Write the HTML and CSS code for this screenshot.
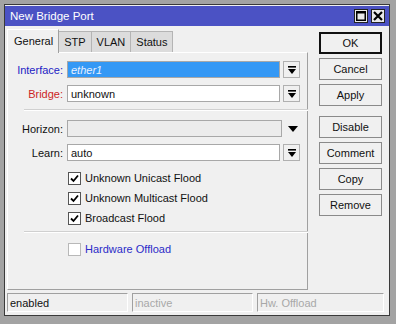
FILE: index.html
```html
<!DOCTYPE html>
<html lang="en">
<head>
  <meta charset="UTF-8">
  <title>New Bridge Port</title>
  <link rel="stylesheet" href="styles.css">
</head>
<body>

  <div class="window">
    <div class="titlebar">
      <span class="title">New Bridge Port</span>
      <div class="title-btns">
        <span class="tbtn">
          <svg width="10" height="10" viewBox="0 0 10 10"><rect x="0.75" y="0.75" width="8.5" height="8.5" fill="none" stroke="#000" stroke-width="1.5"/><rect x="0" y="0" width="10" height="2.5" fill="#000"/></svg>
        </span>
        <span class="tbtn">
          <svg width="10" height="10" viewBox="0 0 10 10"><path d="M1 1 L9 9 M9 1 L1 9" stroke="#000" stroke-width="2.2"/></svg>
        </span>
      </div>
    </div>

    <div class="main">
      <div class="left">
        <div class="tabs">
          <span class="tab active">General</span>
          <span class="tab">STP</span>
          <span class="tab">VLAN</span>
          <span class="tab">Status</span>
        </div>

        <div class="panel">
          <div class="row">
            <label class="lbl blue">Interface:</label>
            <div class="field selected">ether1</div>
            <span class="dd"><svg width="8" height="8" viewBox="0 0 8 8"><rect x="0" y="0" width="8" height="1.6" fill="#000"/><path d="M0 3 H8 L4 8 Z" fill="#000"/></svg></span>
          </div>
          <div class="row">
            <label class="lbl red">Bridge:</label>
            <div class="field">unknown</div>
            <span class="dd"><svg width="8" height="8" viewBox="0 0 8 8"><rect x="0" y="0" width="8" height="1.6" fill="#000"/><path d="M0 3 H8 L4 8 Z" fill="#000"/></svg></span>
          </div>

          <div class="sep"></div>

          <div class="row">
            <label class="lbl">Horizon:</label>
            <div class="field disabled wide"></div>
            <span class="arrow"><svg width="10" height="6" viewBox="0 0 10 6"><path d="M0 0 H10 L5 6 Z" fill="#000"/></svg></span>
          </div>
          <div class="row">
            <label class="lbl">Learn:</label>
            <div class="field">auto</div>
            <span class="dd"><svg width="8" height="8" viewBox="0 0 8 8"><rect x="0" y="0" width="8" height="1.6" fill="#000"/><path d="M0 3 H8 L4 8 Z" fill="#000"/></svg></span>
          </div>

          <div class="checks">
            <div class="check">
              <span class="box"><svg width="11" height="11" viewBox="0 0 11 11"><path d="M2 5.5 L4.5 8 L9 2.5" fill="none" stroke="#000" stroke-width="1.8"/></svg></span>
              Unknown Unicast Flood
            </div>
            <div class="check">
              <span class="box"><svg width="11" height="11" viewBox="0 0 11 11"><path d="M2 5.5 L4.5 8 L9 2.5" fill="none" stroke="#000" stroke-width="1.8"/></svg></span>
              Unknown Multicast Flood
            </div>
            <div class="check">
              <span class="box"><svg width="11" height="11" viewBox="0 0 11 11"><path d="M2 5.5 L4.5 8 L9 2.5" fill="none" stroke="#000" stroke-width="1.8"/></svg></span>
              Broadcast Flood
            </div>
          </div>

          <div class="sep tight"></div>

          <div class="check hw">
            <span class="box off"></span>
            Hardware Offload
          </div>
        </div>
      </div>

      <div class="buttons">
        <button class="btn default">OK</button>
        <button class="btn">Cancel</button>
        <button class="btn">Apply</button>
        <button class="btn group">Disable</button>
        <button class="btn">Comment</button>
        <button class="btn">Copy</button>
        <button class="btn">Remove</button>
      </div>
    </div>

    <div class="statusbar">
      <span class="pane">enabled</span>
      <span class="pane dim">inactive</span>
      <span class="pane dim last">Hw. Offload</span>
    </div>
  </div>

</body>
</html>
```

FILE: styles.css
```css
body {
  margin: 0;
  padding: 4px 0 0 4px;
  background: #a3a3a3;
  font-family: "Liberation Sans", Arial, sans-serif;
  font-size: 11px;
  color: #111;
  height: 324px;
  box-sizing: border-box;
  overflow: hidden;
}

.window {
  width: 386px;
  height: 312px;
  box-sizing: border-box;
  border: 1px solid #3a3a3a;
  background: #f0f0f0;
  display: flex;
  flex-direction: column;
}

.titlebar {
  margin-top: 1px;
  height: 20px;
  background: #4b52c4;
  display: flex;
  align-items: center;
  justify-content: space-between;
  padding: 0 4px 0 5px;
}

.title {
  color: #fff;
  font-size: 11.5px;
}

.title-btns {
  display: flex;
  gap: 3px;
}

.tbtn {
  width: 14px;
  height: 14px;
  box-sizing: border-box;
  border: 1px solid #222;
  background: #eaeaea;
  display: flex;
  align-items: center;
  justify-content: center;
}

.main {
  display: flex;
  padding: 3px 0 0 2px;
  gap: 11px;
}

.left {
  width: 301px;
}

.tabs {
  display: flex;
  align-items: flex-end;
  height: 23px;
}

.tab {
  height: 21px;
  box-sizing: border-box;
  border: 1px solid #b4b4b4;
  border-bottom: none;
  border-left: none;
  background: #dcdcdc;
  padding: 0 5px;
  display: flex;
  align-items: center;
}

.tab.active {
  height: 24px;
  margin-bottom: -1px;
  background: #f0f0f0;
  border-left: 1px solid #fff;
  border-top: 1px solid #fff;
  border-right: 1px solid #a0a0a0;
  padding: 0 5px 2px 6px;
  position: relative;
}

.panel {
  height: 238px;
  box-sizing: border-box;
  border: 1px solid #a0a0a0;
  border-left-color: #fff;
  border-top-color: #fff;
  padding: 8px 7px 0 0;
}

.row {
  display: flex;
  align-items: center;
  height: 17px;
  margin-bottom: 7px;
}

.lbl {
  width: 55px;
  text-align: right;
  margin-right: 4px;
}

.blue {
  color: #2222c4;
}

.red {
  color: #cc1f1f;
}

.field {
  width: 213px;
  height: 17px;
  box-sizing: border-box;
  border: 1px solid #a8a8a8;
  background: #fff;
  padding: 0 3px;
  display: flex;
  align-items: center;
}

.field.selected {
  background: #3498f5;
  color: #e8f0ff;
  font-style: italic;
}

.field.disabled {
  background: #ececec;
}

.field.wide {
  width: 215px;
}

.dd {
  width: 17px;
  height: 17px;
  box-sizing: border-box;
  margin-left: 3px;
  border: 1px solid #b0b0b0;
  display: flex;
  align-items: center;
  justify-content: center;
}

.arrow {
  margin-left: 6px;
  display: flex;
}

.sep {
  margin: 3px 0 9px 16px;
  width: 284px;
  height: 1px;
  background: #d0d0d0;
  border-bottom: 1px solid #fff;
}

.sep.tight {
  margin-bottom: 6px;
}

.checks {
  margin-top: 7px;
}

.check {
  display: flex;
  align-items: center;
  height: 20px;
  padding-left: 60px;
}

.box {
  width: 13px;
  height: 13px;
  box-sizing: border-box;
  border: 1px solid #555;
  background: #fff;
  margin-right: 4px;
  display: flex;
  align-items: center;
  justify-content: center;
}

.box.off {
  border-color: #b8b8b8;
}

.hw {
  color: #2b2bc8;
}

.buttons {
  display: flex;
  flex-direction: column;
  gap: 4px;
  padding-top: 3px;
}

.btn {
  width: 63px;
  height: 22px;
  border: 1px solid #8a8a8a;
  background: #f0f0f0;
  font-family: inherit;
  font-size: 11px;
  color: #111;
  padding: 0;
}

.btn.default {
  border: 2px solid #111;
}

.btn.group {
  margin-top: 6px;
}

.statusbar {
  display: flex;
  gap: 4px;
  margin-top: 3px;
  padding-left: 2px;
}

.pane {
  width: 121px;
  height: 19px;
  box-sizing: border-box;
  border: 1px solid #fff;
  border-top-color: #a0a0a0;
  border-left-color: #a0a0a0;
  padding-left: 2px;
  display: flex;
  align-items: center;
}

.pane.dim {
  color: #a8a8a8;
}

.pane.last {
  width: 127px;
}
```
